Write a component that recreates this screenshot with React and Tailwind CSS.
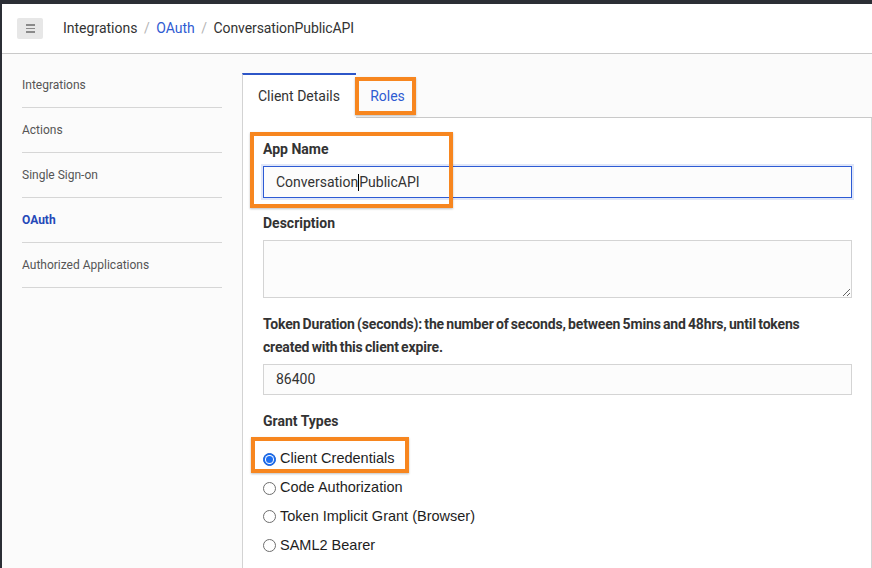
import React from "react";

function Radio({ checked, label }) {
  return (
    <div className="flex items-center h-[28.7px]">
      {checked ? (
        <span className="w-[13px] h-[13px] rounded-full bg-[#1d6ff2] border border-[#1a62d8] flex items-center justify-center">
          <span className="w-[9px] h-[9px] rounded-full bg-white flex items-center justify-center">
            <span className="w-[7px] h-[7px] rounded-full bg-[#1d6ff2]" />
          </span>
        </span>
      ) : (
        <span className="w-[13px] h-[13px] rounded-full bg-white border border-[#6e6e6e]" />
      )}
      <span className="ml-[4px] text-[14.5px] text-[#1e1e1e] font-['Liberation_Sans',Arial,sans-serif]">
        {label}
      </span>
    </div>
  );
}

export default function App() {
  return (
    <div className="min-h-screen bg-[#2b2e35] pl-[2px] pt-[4px] font-['Roboto',sans-serif] text-[#333]">
      <div className="bg-[#fbfbfb] min-h-[564px] flex flex-col">
        {/* header */}
        <div className="h-[50px] bg-white border-b border-[#c9c9c9] flex items-center pl-[15px]">
          <div className="w-[26px] h-[21px] bg-[#e7e7e7] rounded-[2px] flex flex-col items-center justify-center gap-[2px]">
            <span className="block w-[9px] h-[1.5px] bg-[#8a8a8a]" />
            <span className="block w-[9px] h-[1.5px] bg-[#8a8a8a]" />
            <span className="block w-[9px] h-[1.5px] bg-[#8a8a8a]" />
          </div>
          <div className="ml-[20px] flex items-center text-[14px]">
            <span className="text-[#333]">Integrations</span>
            <span className="mx-[6.5px] text-[#b5b5b5]">/</span>
            <span className="text-[#2f5bd2]">OAuth</span>
            <span className="mx-[6.5px] text-[#b5b5b5]">/</span>
            <span className="text-[#333] tracking-[-0.1px]">ConversationPublicAPI</span>
          </div>
        </div>

        {/* body */}
        <div className="flex flex-1">
          <nav className="w-[200px] ml-[20px] pt-[9px] text-[12px]">
            {["Integrations", "Actions", "Single Sign-on", "OAuth", "Authorized Applications"].map((t) => (
              <div
                key={t}
                className={
                  "h-[45px] flex items-center border-b border-[#d6d6d6] " +
                  (t === "OAuth" ? "font-bold text-[#2448b8]" : "text-[#555]")
                }
              >
                {t}
              </div>
            ))}
          </nav>

          <main className="ml-[20px] flex-1 pt-[19px] flex flex-col">
            {/* tabs */}
            <div className="relative flex h-[45px] text-[14px]">
              <div className="w-[114px] h-[45px] bg-white border-l border-[#d3d3d3] border-t-2 border-t-[#2d56c8] flex items-center justify-center pr-[1px] text-[#333]">
                Client Details
              </div>
              <div className="w-[60px] h-[45px] border-b border-[#c9c9c9] flex items-center justify-center pt-[2px] pl-[3px] text-[#2f5bd2]">
                Roles
              </div>
              <div className="flex-1 border-b border-[#c9c9c9]" />
              <div className="absolute left-[113px] top-[4px] w-[61px] h-[38px] border-[4px] border-[#f7861f] shadow-[0_1px_2px_rgba(0,0,0,0.25)]" />
            </div>

            {/* panel */}
            <div className="relative flex-1 bg-white border-l border-r border-[#d3d3d3] pl-[20px] pr-[19px] pt-[20px]">
              <div className="text-[14px] font-bold leading-[23px] text-[#333]">App Name</div>
              <div className="mt-[5px] h-[32px] border-[1.5px] border-[#2d5bd4] bg-[#fcfcfc] shadow-[0_0_0_2px_rgba(45,91,212,0.15)] flex items-center pl-[12px] text-[14px] text-[#333]">
                <span>Conversation</span>
                <span className="inline-block w-px h-[17px] bg-black" />
                <span>PublicAPI</span>
              </div>

              <div className="mt-[14px] text-[14px] font-bold leading-[23px] text-[#333]">Description</div>
              <textarea
                readOnly
                className="mt-[5px] block w-full h-[58px] border border-[#d4d4d4] bg-[#fcfcfc] outline-none"
              />

              <div className="mt-[15px] text-[14px] font-bold leading-[23px] text-[#333] [word-spacing:-1px] tracking-[-0.17px]">
                Token Duration (seconds): the number of seconds, between 5mins and 48hrs, until tokens
                <br />
                created with this client expire.
              </div>
              <div className="mt-[5px] h-[31px] border border-[#d4d4d4] bg-[#fcfcfc] flex items-center pl-[12px] text-[14px] text-[#333]">
                86400
              </div>

              <div className="mt-[15px] text-[14px] font-bold leading-[23px] text-[#333]">Grant Types</div>
              <div className="mt-[12px] flex flex-col">
                <Radio checked label="Client Credentials" />
                <Radio label="Code Authorization" />
                <Radio label="Token Implicit Grant (Browser)" />
                <Radio label="SAML2 Bearer" />
              </div>

              <div className="absolute left-[7px] top-[14px] w-[203px] h-[76px] border-[4px] border-[#f7861f] shadow-[0_1px_2px_rgba(0,0,0,0.25)]" />
              <div className="absolute left-[8px] top-[319px] w-[158px] h-[36px] border-[4px] border-[#f7861f] shadow-[0_1px_2px_rgba(0,0,0,0.25)]" />
            </div>
          </main>
        </div>
      </div>
    </div>
  );
}
